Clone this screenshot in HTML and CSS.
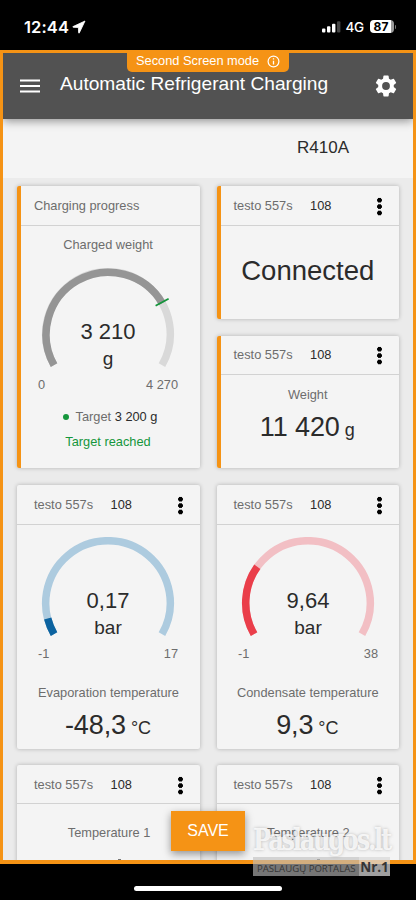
FILE: index.html
```html
<!DOCTYPE html>
<html lang="en">
<head>
<meta charset="utf-8">
<title>Automatic Refrigerant Charging</title>
<link rel="stylesheet" href="styles.css">
</head>
<body>
<div class="status">
  <span class="time">12:44</span>
  <svg class="locate" width="14" height="14" viewBox="0 0 14 14"><path d="M13 1 1 6.6q-.6.5.2.7l5.2.2.2 5.2q.2.8.7.2z" fill="#fff" stroke="#fff" stroke-width=".8" stroke-linejoin="round"/></svg>
  <svg class="signal" width="19" height="12" viewBox="0 0 19 12"><rect x="0" y="7.5" width="3.4" height="4" rx="1" fill="#fff"/><rect x="5" y="5.3" width="3.4" height="6.2" rx="1" fill="#fff"/><rect x="10" y="2.7" width="3.4" height="8.8" rx="1" fill="#fff"/><rect x="15" y=".2" width="3.4" height="11.3" rx="1" fill="#444"/></svg>
  <span class="net">4G</span>
  <span class="battery">87</span><span class="cap"></span>
</div>
<div class="app">
  <header class="bar">
    <svg class="burger" width="20" height="14" viewBox="0 0 20 14"><path d="M0 1.6h20M0 7h20M0 12.4h20" stroke="#fff" stroke-width="2"/></svg>
    <h1>Automatic Refrigerant Charging</h1>
    <svg class="gear" width="26" height="26" viewBox="0 0 24 24"><path fill="#fff" d="M19.14 12.94c.04-.3.06-.61.06-.94 0-.32-.02-.64-.07-.94l2.03-1.58a.49.49 0 0 0 .12-.61l-1.92-3.32a.49.49 0 0 0-.59-.22l-2.39.96c-.5-.38-1.03-.7-1.62-.94l-.36-2.54a.48.48 0 0 0-.48-.41h-3.84a.47.47 0 0 0-.47.41l-.36 2.54c-.59.24-1.13.57-1.62.94l-2.39-.96a.48.48 0 0 0-.59.22L2.74 8.87a.48.48 0 0 0 .12.61l2.03 1.58c-.05.3-.09.63-.09.94s.02.64.07.94l-2.03 1.58a.49.49 0 0 0-.12.61l1.92 3.32c.12.22.37.29.59.22l2.39-.96c.5.38 1.03.7 1.62.94l.36 2.54c.05.24.24.41.48.41h3.84c.24 0 .44-.17.47-.41l.36-2.54c.59-.24 1.13-.56 1.62-.94l2.39.96c.22.08.47 0 .59-.22l1.92-3.32a.48.48 0 0 0-.12-.61zM12 15.6a3.6 3.6 0 1 1 0-7.2 3.6 3.6 0 0 1 0 7.2z"/></svg>
    <div class="mode"><span>Second Screen mode</span><svg width="13" height="13" viewBox="0 0 13 13"><circle cx="6.5" cy="6.5" r="5.4" fill="none" stroke="#fff" stroke-width="1.2"/><path d="M6.5 5.8v3.7M6.5 3.3v1.3" stroke="#fff" stroke-width="1.3"/></svg></div>
  </header>
  <div class="gas">R410A</div>
  <main class="board">
    <div class="row first">
      <section class="card marked">
        <div class="head">Charging progress</div>
        <div class="label charged">Charged weight</div>
        <svg class="gauge" width="150" height="124" viewBox="-75 -66 150 124">
          <path d="M-53.95 31.15A62.3 62.3 0 1 1 53.95 31.15" fill="none" stroke="#d9d9d9" stroke-width="7.5"/>
          <path d="M-53.95 31.15A62.3 62.3 0 0 1 54.17 -30.77" fill="none" stroke="#959595" stroke-width="7.5"/>
          <path d="M47.6 -28.3 60.6 -35.3" stroke="#15963c" stroke-width="1.8"/>
          <text class="num" y="5.4">3 210</text><text class="unit" y="31">g</text>
          <text class="range" x="-70" y="55">0</text><text class="range end" x="70" y="55">4 270</text>
        </svg>
        <div class="target"><i class="dot"></i><span>Target <b>3 200 g</b></span></div>
        <div class="reached">Target reached</div>
      </section>
      <div class="stack">
        <section class="card marked">
          <div class="head"><span>testo 557s</span><b>108</b><i class="more"></i></div>
          <div class="connected">Connected</div>
        </section>
        <section class="card marked">
          <div class="head"><span>testo 557s</span><b>108</b><i class="more"></i></div>
          <div class="label weight">Weight</div>
          <div class="value"><span>11 420</span><small>g</small></div>
        </section>
      </div>
    </div>
    <div class="row second">
      <section class="card">
        <div class="head"><span>testo 557s</span><b>108</b><i class="more"></i></div>
        <svg class="gauge low" width="150" height="124" viewBox="-75 -66 150 124">
          <path d="M-53.95 31.15A62.3 62.3 0 1 1 53.95 31.15" fill="none" stroke="#adcbdf" stroke-width="7.5"/>
          <path d="M-53.95 31.15A62.3 62.3 0 0 1 -60.3 15.5" fill="none" stroke="#0b629f" stroke-width="7.5"/>
          <text class="num" y="5.4">0,17</text><text class="unit" y="31">bar</text>
          <text class="range" x="-70" y="55">-1</text><text class="range end" x="70" y="55">17</text>
        </svg>
        <div class="label temp">Evaporation temperature</div>
        <div class="value"><span>-48,3</span><small>°C</small></div>
      </section>
      <section class="card">
        <div class="head"><span>testo 557s</span><b>108</b><i class="more"></i></div>
        <svg class="gauge low" width="150" height="124" viewBox="-75 -66 150 124">
          <path d="M-53.95 31.15A62.3 62.3 0 1 1 53.95 31.15" fill="none" stroke="#f2bfc4" stroke-width="7.5"/>
          <path d="M-53.95 31.15A62.3 62.3 0 0 1 -50.7 -36.2" fill="none" stroke="#ea3e4a" stroke-width="7.5"/>
          <text class="num" y="5.4">9,64</text><text class="unit" y="31">bar</text>
          <text class="range" x="-70" y="55">-1</text><text class="range end" x="70" y="55">38</text>
        </svg>
        <div class="label temp">Condensate temperature</div>
        <div class="value"><span>9,3</span><small>°C</small></div>
      </section>
    </div>
    <div class="row third">
      <section class="card">
        <div class="head"><span>testo 557s</span><b>108</b><i class="more"></i></div>
        <div class="label probe">Temperature 1</div>
        <i class="peek"></i>
      </section>
      <section class="card">
        <div class="head"><span>testo 557s</span><b>108</b><i class="more"></i></div>
        <div class="label probe">Temperature 2</div>
        <i class="peek"></i>
      </section>
    </div>
  </main>
</div>
<div class="save">SAVE</div>
<div class="home"><i></i></div>
<div class="mark">
  <div class="brand">Paslaugos.lt</div>
  <div class="tag"><span>PASLAUGŲ PORTALAS</span><b>Nr.1</b></div>
</div>
</body>
</html>
```
FILE: styles.css
```css
* { box-sizing: border-box; }
body {
  margin: 0; width: 416px; height: 900px; overflow: hidden; position: relative;
  background: #000; color: #2b2b2b;
  font: 12.8px "Liberation Sans", Arial, sans-serif;
}
i { font-style: normal; }
.status {
  height: 50px; padding: 3px 20px 0 24px; display: flex; align-items: center;
  color: #fff; font-family: Inter, sans-serif;
}
.time { font-size: 16.5px; font-weight: 600; width: 44px; letter-spacing: .1px; white-space: nowrap; }
.locate { margin-left: 4px; }
.signal { margin-left: auto; }
.net { font-size: 13.5px; font-weight: 500; margin: 0 6px 0 5px; width: 18px; white-space: nowrap; letter-spacing: -.3px; }
.battery {
  width: 24px; height: 13px; border-radius: 4px; text-align: center;
  background: linear-gradient(90deg, #fff 87%, #999 87%);
  color: #000; font-size: 12px; font-weight: 700; line-height: 13px; padding-right: 1px;
}
.cap { width: 1.5px; height: 4px; margin-left: 1px; background: #777; border-radius: 0 2px 2px 0; }
.app {
  height: 814px; border: solid #f59315; border-width: 3px 3px 4px; overflow: hidden;
  background: #ebebeb; display: flex; flex-direction: column;
}
.bar {
  position: relative; z-index: 1; flex: none; height: 66px; padding: 0 14px 0 17px;
  display: flex; align-items: center; background: #525252; color: #fff;
  box-shadow: 0 2px 9px rgba(0,0,0,.42);
}
.burger { margin-top: -1px; }
h1 { margin: 0 0 4px 20px; font-size: 19.15px; font-weight: 400; line-height: 24px; white-space: nowrap; }
.gear { margin-left: auto; margin-top: -1px; }
.mode {
  position: absolute; left: 124px; top: -1px; width: 162px; height: 20px; padding: 0 9px;
  display: flex; align-items: center; justify-content: space-between;
  background: #f59315; border-radius: 0 0 5px 5px; line-height: 16px; padding-bottom: 2px;
}
.gas { flex: none; height: 59px; background: #f4f4f4; padding-left: 294px; font-size: 17px; line-height: 57px; }
.board { padding: 8px 14px 0; display: flex; flex-direction: column; gap: 17px; }
.row { display: grid; grid-template-columns: 183px 182.5px; column-gap: 16.5px; }
.first { height: 282px; }
.second { height: 263.5px; }
.third { height: 140px; margin-top: -.5px; }
.stack { display: grid; grid-template-rows: 133px 132.5px; gap: 16.5px; }
.card {
  background: #f4f4f4; border-radius: 2px; box-shadow: 0 0 4px rgba(0,0,0,.25);
  display: flex; flex-direction: column; align-items: center; overflow: hidden;
}
.marked { background: linear-gradient(90deg, #f59315 4.5px, #f4f4f4 4.5px); }
.head {
  align-self: stretch; flex: none; height: 40px; padding: 0 16px 1px 17px; display: flex; align-items: center;
  border-bottom: 1px solid #d2d2d2; color: #6d6d6d;
}
.marked .head { margin-left: 4px; padding-left: 13px; }
.stack .card:last-child .head, .third .head { height: 39px; padding-bottom: 0; }
.head b { color: #2b2b2b; font-weight: 400; margin-left: 17.5px; }
.more {
  width: 5px; height: 19.2px; margin: 3px 1px 0 auto;
  background: radial-gradient(circle, #000 2.1px, transparent 2.7px) top / 5px 6.4px repeat-y;
}
.label { color: #6d6d6d; line-height: 16px; }
.charged { margin-top: 11px; margin-left: -1px; }
.weight { margin-top: 12px; }
.temp { margin-top: 23.5px; }
.probe { margin-top: 21px; margin-left: 1px; }
.gauge { flex: none; margin-top: 15px; margin-left: -1px; }
.gauge.low { margin-top: 12px; }
.card + .card .gauge { margin-left: 0; }
.gauge text { text-anchor: middle; fill: #2b2b2b; }
.gauge .num { font-size: 22px; }
.gauge .unit { font-size: 19px; }
.gauge .range { fill: #6d6d6d; font-size: 12.8px; text-anchor: start; }
.gauge .range.end { text-anchor: end; }
.target { display: flex; align-items: center; gap: 7px; margin-top: 16.5px; padding-left: 3px; line-height: 16px; color: #6d6d6d; }
.target b { color: #2b2b2b; font-weight: 400; }
.dot { width: 6px; height: 6px; border-radius: 50%; background: #15963c; }
.reached { margin: 9.5px 0 0 -1px; line-height: 16px; color: #15963c; }
.connected { font-size: 27.5px; line-height: 32px; margin-top: 29px; }
.value { display: flex; align-items: baseline; gap: 5px; font-size: 27px; line-height: 32px; margin-top: 8.5px; margin-left: -1px; letter-spacing: -.1px; }
.value small { font-size: 18px; line-height: 20px; }
.peek { width: 3px; height: 1px; margin: 18px 0 0 22px; background: #777; }
.save {
  position: absolute; left: 171px; top: 811px; width: 74px; height: 40px; z-index: 3;
  background: #f59315; color: #fff; font-size: 16px; line-height: 39px; text-align: center;
  box-shadow: 0 3px 8px rgba(0,0,0,.4);
}
.home { height: 36px; display: flex; justify-content: center; padding-top: 22px; }
.home i { width: 148px; height: 5px; border-radius: 3px; background: #fff; }
.mark { position: absolute; left: 253px; top: 824px; width: 137px; z-index: 4; }
.brand {
  height: 33px; line-height: 34px; font-family: "DejaVu Serif Condensed", "DejaVu Serif", serif; font-weight: 700; font-size: 25px;
  font-stretch: condensed; letter-spacing: -2.1px; white-space: nowrap;
  transform: scale(1.07, 1.18); transform-origin: 0 60%;
  color: rgba(255,255,255,.8); text-shadow: 0 0 3px rgba(0,0,0,.25);
}
.tag {
  display: flex; height: 19px; background: rgba(190,190,190,.62); color: #353535;
  font: 9.6px/23px "Open Sans", sans-serif; white-space: nowrap;
}
.tag span { width: 106px; padding-left: 4px; }
.tag b { flex: 1; text-align: center; background: rgba(255,255,255,.3); font-size: 13.5px; line-height: 21px; }
```
